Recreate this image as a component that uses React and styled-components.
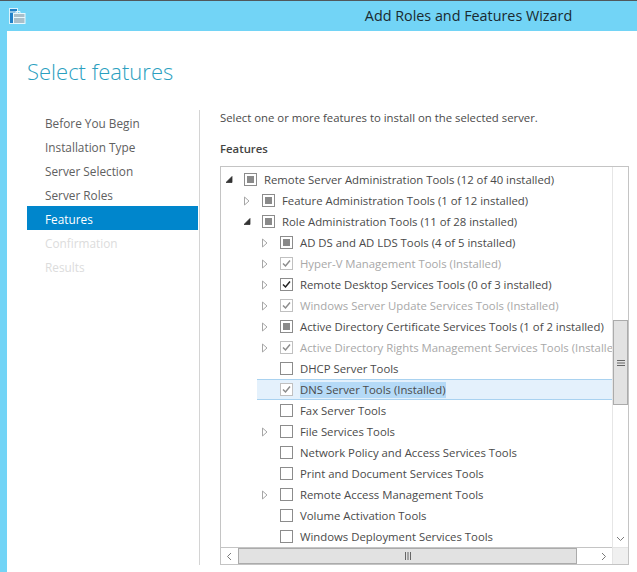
import React from "react";
import styled, { createGlobalStyle } from "styled-components";

const Global = createGlobalStyle`
  html, body { margin: 0; padding: 0; background: #fff; }
  body { width: 637px; height: 572px; overflow: hidden; font-family: "Open Sans", "Noto Sans", sans-serif; }
`;

const Frame = styled.div`
  width: 637px; height: 572px; display: flex; flex-direction: column;
  background: #72d4f6; border-top: 1px solid #50585c; box-sizing: border-box; overflow: hidden;
`;
const TitleBar = styled.header`
  height: 30px; flex: none; display: flex; align-items: center; position: relative; padding-left: 9px;
`;
const TitleText = styled.div`
  position: absolute; left: 300px; right: 0; top: 5px; text-align: center;
  font-size: 14.35px; line-height: 20px; color: #1a2a30;
  font-family: "Open Sans", sans-serif;
`;
const Client = styled.div`
  flex: 1; margin-left: 7px; background: #fff; display: flex; flex-direction: column; min-height: 0;
`;
const Heading = styled.h1`
  margin: 24px 0 0 20px; font-size: 22px; line-height: 32px; font-weight: 300; color: #2b9fbf; height: 32px;
  font-family: "Open Sans", sans-serif;
`;
const Body = styled.div`
  margin-top: 23px; display: flex; flex: 1; min-height: 0; padding-bottom: 7px;
`;
const Side = styled.nav`
  width: 171px; margin-left: 20px; flex: none; display: flex; flex-direction: column;
`;
const Step = styled.div`
  height: 24px; box-sizing: border-box; padding-top: 1px; line-height: 24px; padding-left: 18px; font-size: 11.8px;
  color: ${p => p.$active ? "#fff" : p.$off ? "#dcdcdc" : "#606060"};
  background: ${p => p.$active ? "#0086cc" : "transparent"};
`;
const Main = styled.main`
  margin-left: 1px; border-left: 1px solid #d4d4d4; padding-left: 20px; flex: 1; display: flex; flex-direction: column; min-width: 0;
`;
const Intro = styled.div`
  font-size: 11.35px; line-height: 16px; color: #4a4a4a;
`;
const Label = styled.div`
  font-size: 11.35px; line-height: 16px; font-weight: 600; color: #444; margin-top: 15px; margin-bottom: 9px;
`;
const TreeBox = styled.div`
  width: 409px; height: 399px; box-sizing: border-box; border: 1px solid #c4c4c4;
  display: grid; grid-template-columns: 1fr 16px; grid-template-rows: 1fr 17px; background: #fff;
`;
const List = styled.div`
  padding-top: 2px; overflow: hidden; min-width: 0;
`;
const Row = styled.div`
  height: 21px; box-sizing: border-box; display: flex; align-items: center; white-space: nowrap;
  padding-left: ${p => 5 + p.$level * 18}px;
`;
const SelectedRow = styled(Row)`
  background: #e4f1fc; border-top: 1px solid #a9d2f0; border-bottom: 1px solid #a9d2f0;
  margin-left: 36px; padding-left: 5px;
`;
const ArrowSlot = styled.span`
  width: 18px; height: 13px; flex: none; display: flex; align-items: center;
`;
const Check = styled.span`
  width: 13px; height: 13px; flex: none; box-sizing: border-box;
  border: 1px solid ${p => p.$dim ? "#c0c0c0" : "#8c8c8c"}; background: #fff;
  display: flex; align-items: center; justify-content: center;
`;
const Fill = styled.span`
  width: 7px; height: 7px; background: #8a8a8a; display: block;
`;
const Name = styled.span`
  margin-left: 7px; font-size: 11.35px; line-height: 16px; color: ${p => p.$dim ? "#a8a8a8" : "#4a4a4a"};
  background: ${p => p.$sel ? "#b5daf7" : "transparent"};
`;
const VBar = styled.div`
  border-left: 1px solid #e6e6e6; display: flex; flex-direction: column; background: #fff;
`;
const HBar = styled.div`
  border-top: 1px solid #c4c4c4; display: flex; background: #fff;
`;
const Corner = styled.div`
  background: #f0f0f0; border-top: 1px solid #e4e4e4; border-left: 1px solid #e4e4e4;
`;
const ScrollButton = styled.div`
  flex: none; display: flex; align-items: center; justify-content: center;
  width: ${p => p.$w || "auto"}; height: ${p => p.$h || "auto"};
`;
const Track = styled.div`
  flex: 1; display: flex; min-width: 0; min-height: 0;
  flex-direction: ${p => p.$vertical ? "column" : "row"};
`;
const VThumb = styled.div`
  margin-top: 153px; height: 85px; box-sizing: border-box; background: #e2e2e2; border: 1px solid #ababab;
  display: flex; align-items: center; justify-content: center;
`;
const HThumb = styled.div`
  width: 339px; box-sizing: border-box; background: #e2e2e2; border: 1px solid #ababab;
  display: flex; align-items: center; justify-content: center;
`;

const Chevron = ({ d }) => (
  <svg width="9" height="9" viewBox="0 0 9 9"><path d={d} fill="none" stroke="#7a7a7a" strokeWidth="1" /></svg>
);
const Grip = ({ vertical }) => (
  <svg width="8" height="8" viewBox="0 0 8 8">
    {[1.5, 4, 6.5].map(v => vertical
      ? <path key={v} d={`M0 ${v}H8`} stroke="#666" strokeWidth="1" />
      : <path key={v} d={`M${v} 0V8`} stroke="#666" strokeWidth="1" />)}
  </svg>
);
const Arrow = ({ open }) => open ? (
  <svg width="9" height="9" viewBox="0 0 9 9"><path d="M6 1.5V7.5H0Z" fill="#333" stroke="#333" strokeWidth="0.8" /></svg>
) : (
  <svg width="9" height="10" viewBox="0 0 9 10"><path d="M0.5 1L5 5L0.5 9Z" fill="#fff" stroke="#a6a6a6" strokeWidth="1" /></svg>
);
const Tick = ({ dim }) => (
  <svg width="11" height="11" viewBox="0 0 11 11"><path d="M2 5.5L4.5 8L9 2.5" fill="none" stroke={dim ? "#8c8c8c" : "#222"} strokeWidth="1.5" /></svg>
);

const rows = [
  { l: 0, a: "open", c: "part", t: "Remote Server Administration Tools (12 of 40 installed)" },
  { l: 1, a: "closed", c: "part", t: "Feature Administration Tools (1 of 12 installed)" },
  { l: 1, a: "open", c: "part", t: "Role Administration Tools (11 of 28 installed)" },
  { l: 2, a: "closed", c: "part", t: "AD DS and AD LDS Tools (4 of 5 installed)" },
  { l: 2, a: "closed", c: "dimcheck", t: "Hyper-V Management Tools (Installed)", dim: true },
  { l: 2, a: "closed", c: "check", t: "Remote Desktop Services Tools (0 of 3 installed)" },
  { l: 2, a: "closed", c: "dimcheck", t: "Windows Server Update Services Tools (Installed)", dim: true },
  { l: 2, a: "closed", c: "part", t: "Active Directory Certificate Services Tools (1 of 2 installed)" },
  { l: 2, a: "closed", c: "dimcheck", t: "Active Directory Rights Management Services Tools (Installed)", dim: true },
  { l: 2, c: "none", t: "DHCP Server Tools" },
  { l: 2, c: "dimcheck", t: "DNS Server Tools (Installed)", sel: true },
  { l: 2, c: "none", t: "Fax Server Tools" },
  { l: 2, a: "closed", c: "none", t: "File Services Tools" },
  { l: 2, c: "none", t: "Network Policy and Access Services Tools" },
  { l: 2, c: "none", t: "Print and Document Services Tools" },
  { l: 2, a: "closed", c: "none", t: "Remote Access Management Tools" },
  { l: 2, c: "none", t: "Volume Activation Tools" },
  { l: 2, c: "none", t: "Windows Deployment Services Tools" },
];

const steps = ["Before You Begin", "Installation Type", "Server Selection", "Server Roles", "Features", "Confirmation", "Results"];

const TreeRow = ({ r }) => {
  const R = r.sel ? SelectedRow : Row;
  return (
    <R $level={r.l}>
      <ArrowSlot>{r.a && <Arrow open={r.a === "open"} />}</ArrowSlot>
      <Check $dim={r.c === "dimcheck"}>
        {r.c === "part" && <Fill />}
        {r.c === "check" && <Tick />}
        {r.c === "dimcheck" && <Tick dim />}
      </Check>
      <Name $dim={r.dim} $sel={r.sel}>{r.t}</Name>
    </R>
  );
};

const AppIcon = () => (
  <svg width="17" height="17" viewBox="0 0 17 17">
    <rect x="0.5" y="0.5" width="8" height="15" fill="#1f80c8" stroke="#d8f2fc" />
    <path d="M1 4H8" stroke="#d8f2fc" strokeWidth="1.2" />
    <path d="M7 5V3.5H11V5" fill="none" stroke="#e8f8fe" strokeWidth="1" />
    <rect x="4.5" y="5.5" width="11.5" height="10" fill="#a9bfca" stroke="#e8f8fe" />
    <path d="M5 9.5H16" stroke="#e8f8fe" strokeWidth="1" />
  </svg>
);

export default function App() {
  return (
    <Frame>
      <Global />
      <TitleBar>
        <AppIcon />
        <TitleText>Add Roles and Features Wizard</TitleText>
      </TitleBar>
      <Client>
        <Heading>Select features</Heading>
        <Body>
          <Side>
            {steps.map((s, i) => <Step key={s} $active={i === 4} $off={i > 4}>{s}</Step>)}
          </Side>
          <Main>
            <Intro>Select one or more features to install on the selected server.</Intro>
            <Label>Features</Label>
            <TreeBox>
              <List>{rows.map(r => <TreeRow key={r.t} r={r} />)}</List>
              <VBar>
                <Track $vertical><VThumb><Grip vertical /></VThumb></Track>
                <ScrollButton $h="17px"><Chevron d="M1 3L4.5 6.5L8 3" /></ScrollButton>
              </VBar>
              <HBar>
                <ScrollButton $w="17px"><Chevron d="M6 1L2.5 4.5L6 8" /></ScrollButton>
                <Track><HThumb><Grip /></HThumb></Track>
                <ScrollButton $w="17px"><Chevron d="M3 1L6.5 4.5L3 8" /></ScrollButton>
              </HBar>
              <Corner />
            </TreeBox>
          </Main>
        </Body>
      </Client>
    </Frame>
  );
}
